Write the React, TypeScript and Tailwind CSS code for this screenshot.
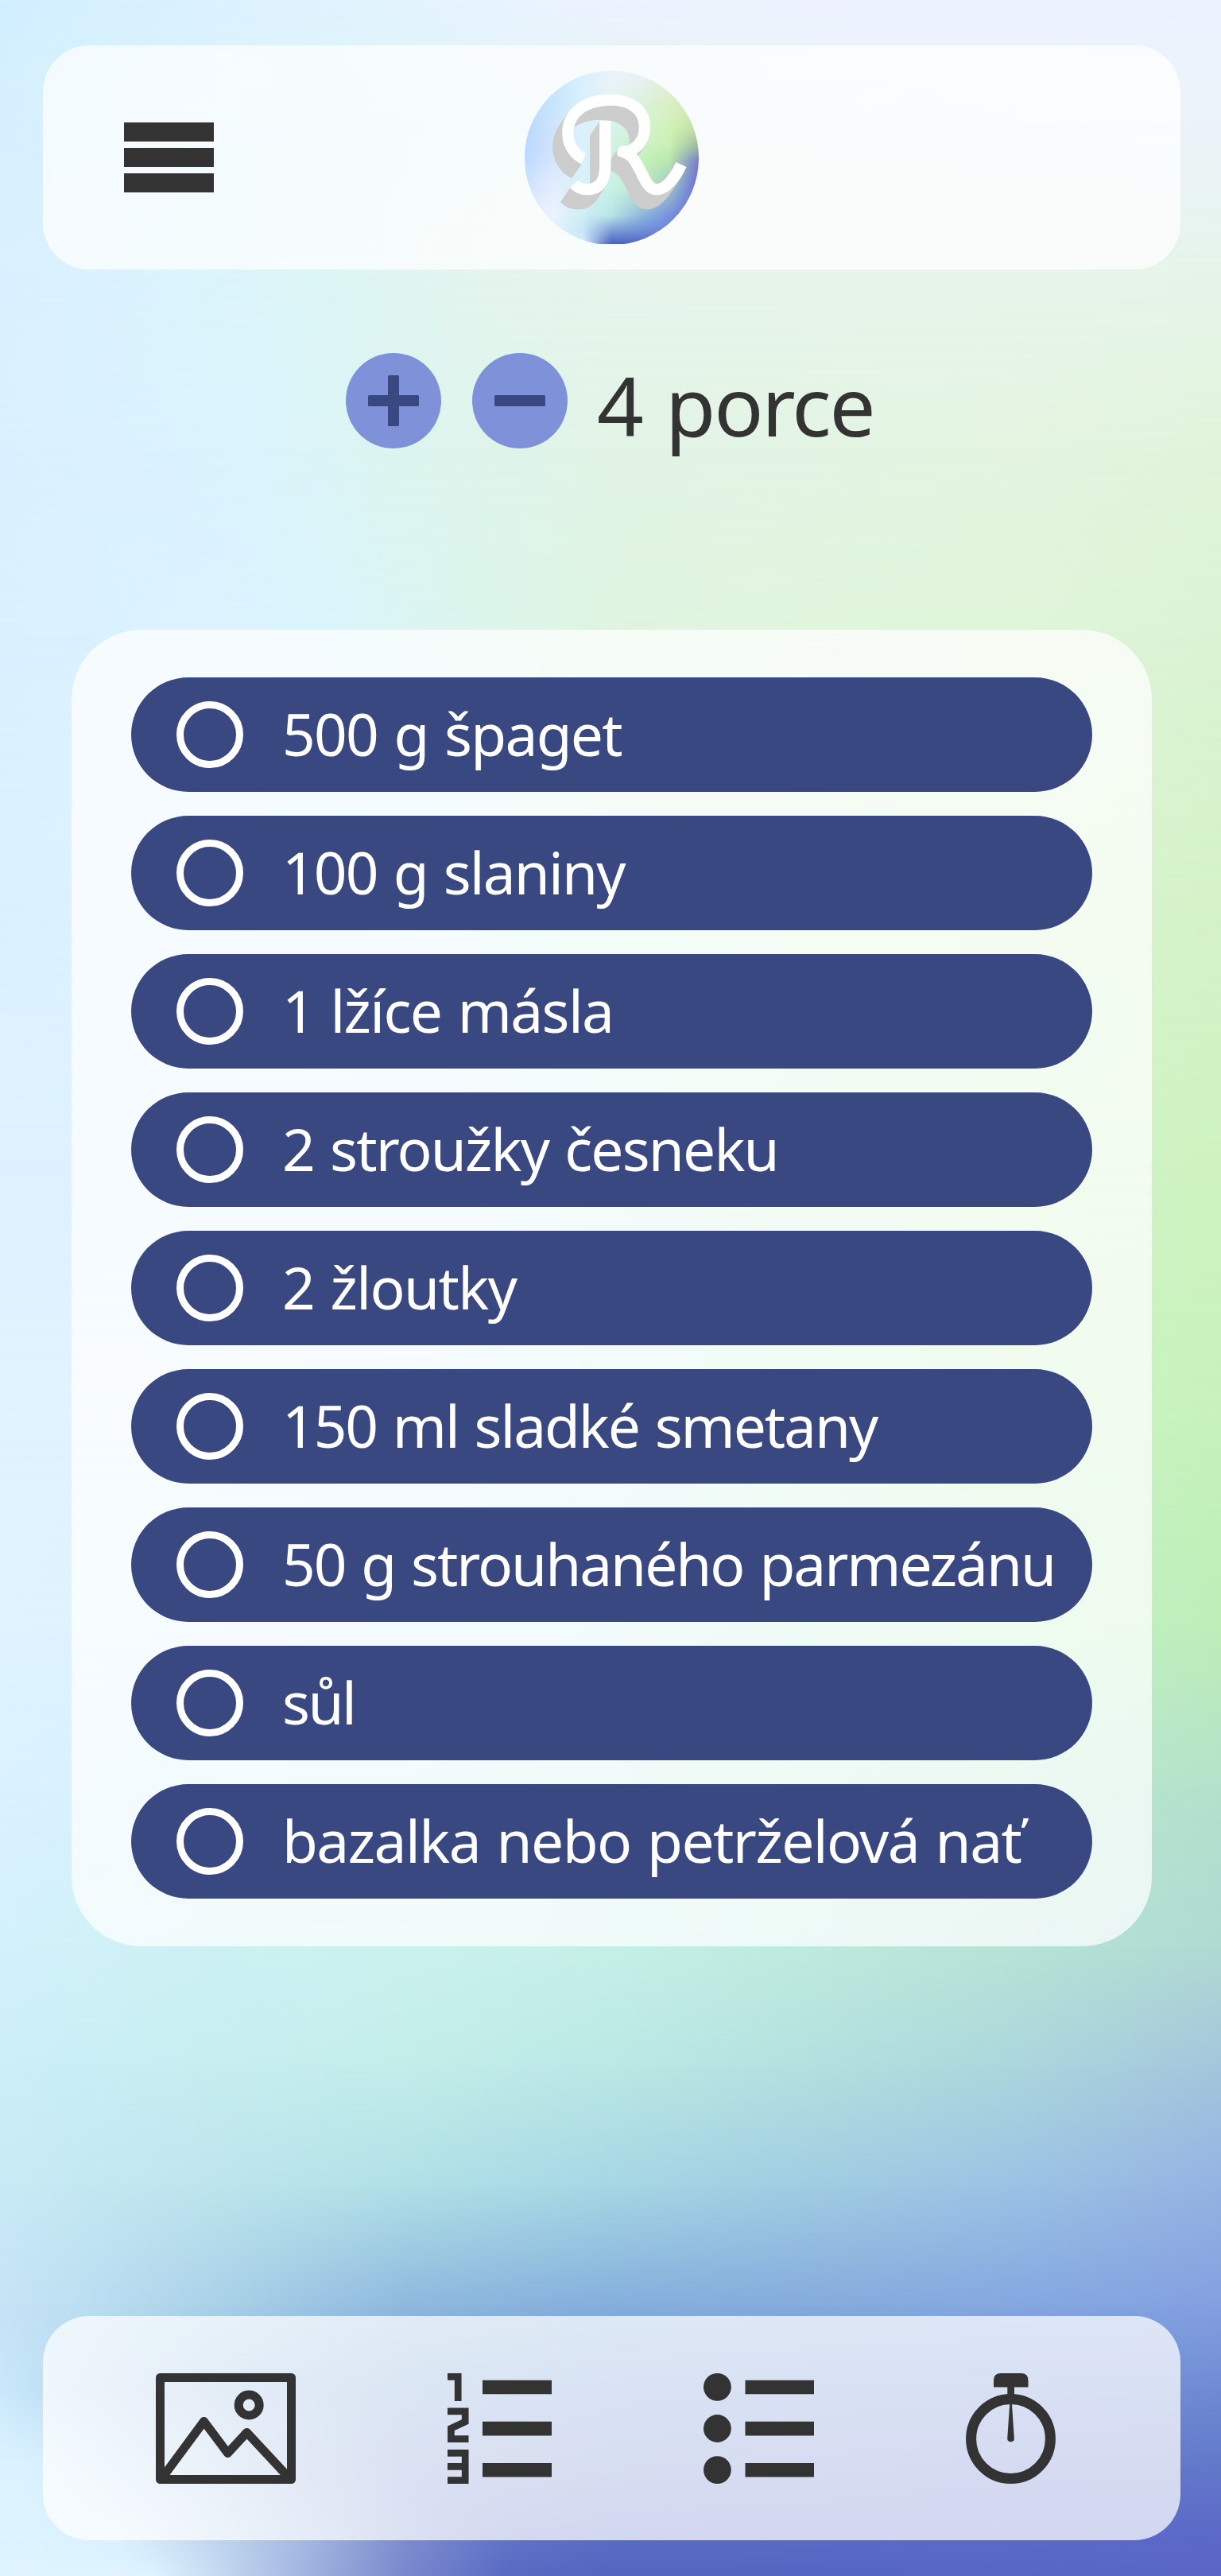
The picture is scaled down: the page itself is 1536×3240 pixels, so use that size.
import React from "react";

type Row = { y: number; stops: [number, string][] };

/* Horizontal colour rows, blended vertically into a soft mesh gradient. */
function Mesh({ rows, width }: { rows: Row[]; width: number }) {
  const line = (r: Row) =>
    `linear-gradient(to right, ${r.stops.map(([x, c]) => `#${c} ${((x / width) * 100).toFixed(2)}%`).join(", ")})`;
  return (
    <div className="absolute inset-0 flex flex-col">
      {rows.slice(0, -1).map((r, i) => (
        <div
          key={r.y}
          className="relative w-full shrink-0 basis-0"
          style={{ flexGrow: rows[i + 1].y - r.y, backgroundImage: line(r) }}
        >
          <div
            className="absolute inset-0 [mask-image:linear-gradient(to_bottom,transparent,black)]"
            style={{ backgroundImage: line(rows[i + 1]) }}
          />
        </div>
      ))}
    </div>
  );
}

const page: Row[] = [
  { y: 0, stops: [[0, "d1effe"], [256, "dbf2fe"], [512, "e3f4fd"], [768, "ecf3fe"], [1024, "eef3ff"], [1536, "ecf3ff"]] },
  { y: 150, stops: [[0, "d6effe"], [256, "dbf3fe"], [512, "dff4f9"], [768, "e6f3f4"], [1024, "e9f3f5"], [1536, "ecf3fa"]] },
  { y: 340, stops: [[0, "daf0ff"], [220, "dbf4fd"], [400, "dcf5f5"], [640, "e5f5ed"], [768, "e7f5ec"], [1280, "e7f5eb"], [1536, "e6f4ea"]] },
  { y: 560, stops: [[0, "daf0ff"], [330, "dbf4fc"], [512, "dcf5ee"], [768, "e2f4e6"], [1024, "e3f4e4"], [1280, "e4f4e0"], [1536, "e1f4db"]] },
  { y: 790, stops: [[0, "daf0ff"], [256, "dbf2ff"], [430, "daf4fa"], [600, "daf5ea"], [768, "def4e0"], [1024, "e0f5dc"], [1280, "dff5d9"], [1536, "dbf3d4"]] },
  { y: 1120, stops: [[0, "dbf1ff"], [256, "dbf2ff"], [512, "daf3fb"], [680, "d8f4ee"], [860, "d8f5de"], [1280, "d8f4d0"], [1536, "d5f2c8"]] },
  { y: 1450, stops: [[0, "dff1ff"], [512, "dcf2ff"], [768, "d6f3f0"], [1024, "d0f3d4"], [1280, "d0f3c6"], [1536, "cff3c1"]] },
  { y: 1800, stops: [[0, "e1f3ff"], [512, "def2ff"], [768, "d4f3f0"], [1024, "c8f3d6"], [1280, "c8f3c4"], [1536, "c6f2bb"]] },
  { y: 2050, stops: [[0, "dff3ff"], [512, "d8f2fd"], [768, "d0f2f2"], [1024, "c4f2da"], [1280, "c1f1c6"], [1536, "bdeeb8"]] },
  { y: 2250, stops: [[0, "daf2ff"], [256, "d5f1fc"], [512, "d0f2f5"], [768, "c9f2e9"], [1024, "bfefd8"], [1280, "b9ead0"], [1536, "b3e1cb"]] },
  { y: 2450, stops: [[0, "d2f1fb"], [256, "cdf1f3"], [512, "caf2ee"], [768, "c5f0e7"], [1024, "beeadd"], [1280, "b7e3d6"], [1536, "afdad2"]] },
  { y: 2600, stops: [[0, "cceef8"], [256, "c6eef0"], [512, "c2ede9"], [768, "bae8e4"], [1024, "b2e0de"], [1280, "abd6dc"], [1536, "a3c6dc"]] },
  { y: 2750, stops: [[0, "c8eaf5"], [256, "bde5ec"], [512, "b0e0e6"], [768, "a6d6e4"], [1024, "a0cce2"], [1280, "9bc2e4"], [1536, "94b3e2"]] },
  { y: 2900, stops: [[0, "c5e3f5"], [110, "bbdef1"], [300, "a6cee7"], [512, "8eb8de"], [768, "84aedc"], [1024, "84abdc"], [1280, "84a7e0"], [1536, "83a0e0"]] },
  { y: 3000, stops: [[0, "c8e8fa"], [60, "bfdff5"], [256, "9cc0e3"], [512, "79a2d5"], [768, "7298d4"], [1024, "7092d4"], [1280, "708fd6"], [1536, "708dd4"]] },
  { y: 3100, stops: [[0, "dcf3ff"], [60, "d8f0fe"], [256, "b0cdea"], [512, "7792d0"], [768, "6a86cc"], [1024, "687fcd"], [1280, "6578cc"], [1536, "6279c9"]] },
  { y: 3195, stops: [[0, "ddf3ff"], [150, "dbf1fe"], [256, "c4daf1"], [384, "a2b9e1"], [512, "7b8ccf"], [640, "5f73c8"], [768, "586cc4"], [1536, "5c68c8"]] },
  { y: 3240, stops: [[0, "def4ff"], [190, "def3ff"], [256, "ccdff4"], [384, "a2b4e0"], [512, "7887cc"], [640, "586ac2"], [768, "5266bf"], [1536, "5966c4"]] },
];

const even = (y: number, colours: string): Row => ({
  y,
  stops: colours.split(" ").map((c, i) => [i * 110, c] as [number, string]),
});

const badge: Row[] = [
  even(60, "c8e2fd cfe9fd d8f0fc ecf2fd ebf2f8 e0eee6 dcebd8"),
  even(170, "bedefe c6e4fd d8f1fc e6f3f2 def2e0 dceec8 dcecb8"),
  even(279, "b8d8ff cfe4fd dbf1fd d6f3ec d2f3d0 d0f2b8 c0dda0"),
  even(345, "b8d8ff d2e4fd dbf1fd d0f3e2 ccf2c6 c8f0b2 9ab8a0"),
  even(400, "bedaff d6e6fd daf1fc cdf2e0 c6f2bc b8e6ac 7a7ccc"),
  even(498, "d0e2ff e2edfd d6f2fa c8f2e6 bdeec6 9fc8c8 6668dc"),
  even(607, "e8f0fd ebf3fd cdeff4 b8e4e8 8fb9de 7590e0 6466d8"),
  even(665, "e4f2fd dff3fe cbe6f8 7b9fd6 6f8ed8 6c82dc 6468d6"),
  even(717, "e4f4fe dff3fe d4ecfb 4a5fbc 5468c4 5a6cd0 5a60d0"),
];

const monogram =
  "M283 392C246 376 223 338 223 294C223 215 292 170 385 170C466 170 513 212 513 272C513 328 475 366 430 366C468 374 482 410 499 442C515 473 528 508 558 508C594 508 630 460 651 414M364 250V420C364 472 344 508 297 508C275 508 259 500 247 487";

function Logo() {
  const depth = Array.from({ length: 28 }, (_, i) => (i + 1) / 28);
  return (
    <div className="relative size-[219px] overflow-hidden rounded-full">
      <Mesh rows={badge} width={660} />
      <svg viewBox="60 60 657 657" className="relative size-full" fill="none" strokeWidth="43" strokeLinejoin="round">
        <g stroke="#cdcdcd">
          {depth.map((d) => (
            <path key={d} d={monogram} transform={`translate(${-36 * d} ${54 * d})`} />
          ))}
        </g>
        <path d={monogram} stroke="#ffffff" />
      </svg>
    </div>
  );
}

const items: { text: string; tracking: string }[] = [
  { text: "500 g špaget", tracking: "tracking-[-1.7px]" },
  { text: "100 g slaniny", tracking: "tracking-[-1.9px]" },
  { text: "1 lžíce másla", tracking: "tracking-[-1.65px]" },
  { text: "2 stroužky česneku", tracking: "tracking-[-1.85px]" },
  { text: "2 žloutky", tracking: "tracking-[-1.6px]" },
  { text: "150 ml sladké smetany", tracking: "tracking-[-2.1px]" },
  { text: "50 g strouhaného parmezánu", tracking: "tracking-[-2.05px]" },
  { text: "sůl", tracking: "tracking-[-2.5px]" },
  { text: "bazalka nebo petrželová nať", tracking: "tracking-[-1.55px]" },
];

function ImageIcon() {
  return (
    <svg viewBox="0 0 176 139" className="h-[139px] w-[176px]" fill="none" stroke="#333333" strokeWidth="11" strokeLinejoin="round" strokeLinecap="round">
      <path d="M5.5 5.5H170.5V133.5H5.5Z" />
      <path d="M7 133L60.5 60.5L90.5 100.5L114.5 74.5L169 133" />
      <circle cx="117.2" cy="40" r="13" />
    </svg>
  );
}

function NumberedIcon() {
  return (
    <svg viewBox="0 0 131 139" className="h-[139px] w-[131px]" fill="#333333">
      <path d="M44 8.7h87v17.6h-87zM44 60.8h87v17.6h-87zM44 113h87v17.6h-87z" />
      <g fill="none" stroke="#333333" strokeWidth="8.7">
        <path d="M0 4.35H13.2V35" />
        <path d="M0 47.8H22.2V61L4.4 69.3V82.7H26.5" />
        <path d="M0 100.3H22.2V134.6H0M0 117.4H22" />
      </g>
    </svg>
  );
}

function BulletedIcon() {
  return (
    <svg viewBox="0 0 139 139" className="size-[139px]" fill="#333333">
      <path d="M52.5 8.7h87v17.6h-87zM52.5 60.8h87v17.6h-87zM52.5 113h87v17.6h-87z" />
      <circle cx="17.4" cy="17.4" r="17.4" />
      <circle cx="17.4" cy="69.5" r="17.4" />
      <circle cx="17.4" cy="121.6" r="17.4" />
    </svg>
  );
}

function StopwatchIcon() {
  return (
    <svg viewBox="0 0 113 139" className="h-[139px] w-[113px]" fill="#333333">
      <path d="M35 17.5V9Q35 0 44 0H69.5Q78.5 0 78.5 9V17.5H61V28H52.3V17.5Z" />
      <circle cx="56.5" cy="82.5" r="49.9" fill="none" stroke="#333333" strokeWidth="13" />
      <path d="M55.4 36H57.8L60.9 82.5A4.4 4.4 0 0 1 52.2 82.5Z" />
    </svg>
  );
}

export default function App() {
  return (
    <div className="relative h-[3240px] w-[1536px] overflow-hidden font-['Noto_Sans','Open_Sans',sans-serif]">
      <Mesh rows={page} width={1536} />
      <div className="relative flex h-full flex-col pt-[57px] pl-[54px]">
        <header className="grid h-[282px] w-[1431px] shrink-0 grid-cols-[1fr_219px_1fr] items-center rounded-[58px] bg-white/73">
          <button aria-label="Menu" className="ml-[102px] flex w-[113px] flex-col gap-2">
            <span className="h-6 bg-[#333333]" />
            <span className="h-6 bg-[#333333]" />
            <span className="h-6 bg-[#333333]" />
          </button>
          <Logo />
        </header>

        <section className="mt-[105px] ml-[381px] flex h-[120px] shrink-0 items-center">
          <button aria-label="Přidat porci" className="grid size-[120px] place-items-center rounded-full bg-[#7e91d9]">
            <svg viewBox="0 0 64 64" className="size-16" fill="#3a4881">
              <rect y="25" width="64" height="14" rx="1.5" />
              <rect x="25" width="14" height="64" rx="1.5" />
            </svg>
          </button>
          <button aria-label="Ubrat porci" className="ml-[39px] grid size-[120px] place-items-center rounded-full bg-[#7e91d9]">
            <svg viewBox="0 0 64 64" className="size-16" fill="#3a4881">
              <rect y="25" width="64" height="14" rx="1.5" />
            </svg>
          </button>
          <p className="mt-[10px] ml-[37px] text-[103px] leading-[120px] tracking-[-2.3px] whitespace-nowrap text-[#333333] [word-spacing:5px]">4 porce</p>
        </section>

        <ul className="mt-[228px] ml-[36px] flex h-[1656px] w-[1359px] shrink-0 flex-col gap-[30px] rounded-[88px] bg-white/73 px-[75px] py-[60px]">
          {items.map((item) => (
            <li key={item.text} className="flex h-[144px] items-center rounded-full bg-[#3a4881] pl-[57px] text-white">
              <span className="size-[84px] shrink-0 rounded-full border-[9px] border-white" />
              <span className={`ml-[49px] pb-[3px] text-[73px] leading-none whitespace-nowrap [word-spacing:3px] ${item.tracking}`}>{item.text}</span>
            </li>
          ))}
        </ul>

        <nav className="mt-[465px] flex h-[282px] w-[1431px] shrink-0 items-center gap-[191px] rounded-[58px] bg-white/73 pl-[142px]">
          <ImageIcon />
          <NumberedIcon />
          <BulletedIcon />
          <StopwatchIcon />
        </nav>
      </div>
    </div>
  );
}
